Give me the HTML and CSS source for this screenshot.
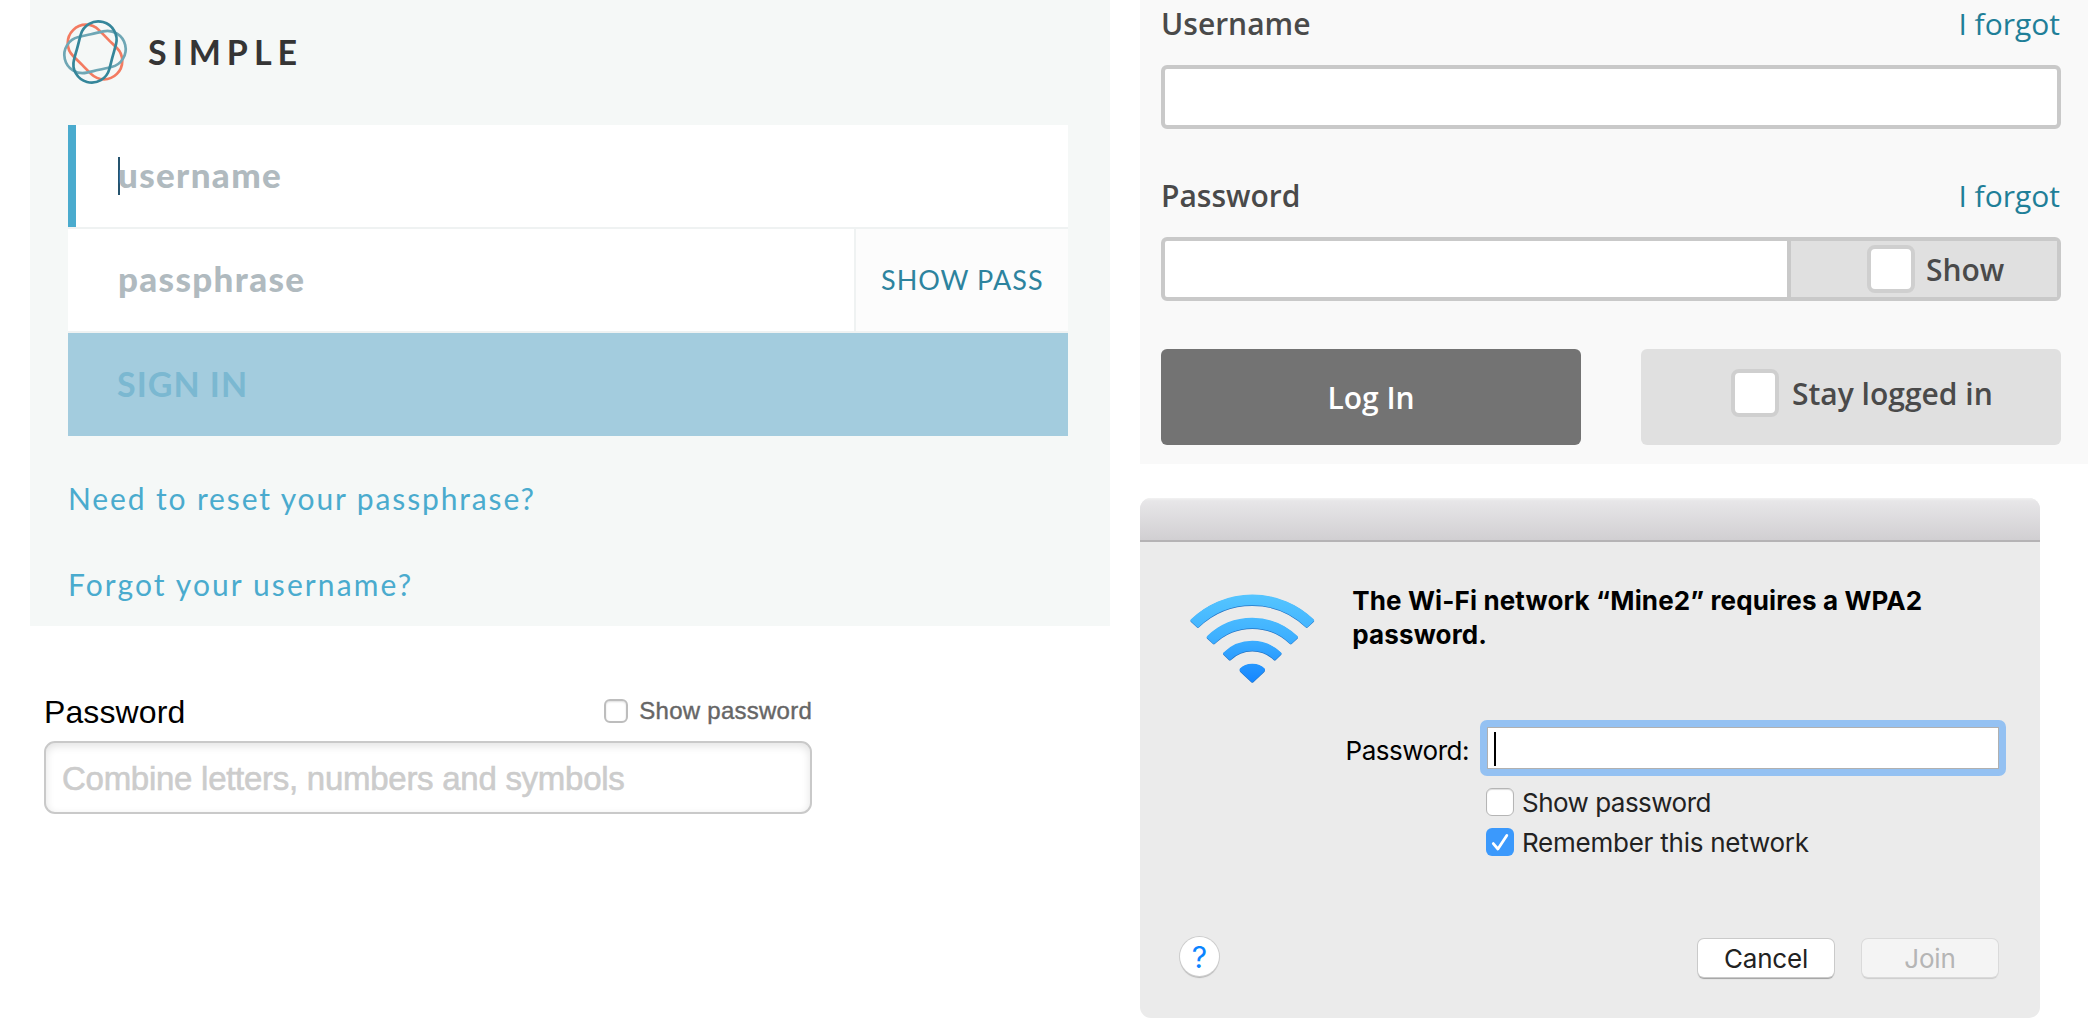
FILE: index.html
```html
<!DOCTYPE html>
<html lang="en">
<head>
<meta charset="utf-8">
<title>Password forms</title>
<link rel="stylesheet" href="styles.css">
</head>
<body>
<main class="page">
  <div class="column-left">
    <section class="simple">
      <header class="brand">
        <svg class="brand-mark" viewBox="-34 -34 68 68" fill="none" stroke-width="2.7">
          <defs>
            <path id="loop" d="M-18.3-12.7A18.3 18.3 0 0 1 18.3-12.7C18.3-7 18.2-5 18.2 0C18.2 5 18.3 7 18.3 12.7A18.3 18.3 0 0 1-18.3 12.7C-18.3 7-18.2 5-18.2 0C-18.2-5-18.3-7-18.3-12.7Z"/>
          </defs>
          <use href="#loop" stroke="#f37b61" transform="rotate(-45)"/>
          <use href="#loop" stroke="#6fa7b5" transform="rotate(77)"/>
          <use href="#loop" stroke="#35869a" transform="rotate(15)"/>
        </svg>
        <span class="brand-name">SIMPLE</span>
      </header>
      <div class="simple-form">
        <div class="simple-row focused"><span class="caret"></span><span class="simple-hint">username</span></div>
        <div class="simple-row"><span class="simple-hint">passphrase</span><span class="show-pass">SHOW PASS</span></div>
        <div class="sign-in">SIGN IN</div>
      </div>
      <nav class="simple-links">
        <a>Need to reset your passphrase?</a>
        <a class="forgot-username">Forgot your username?</a>
      </nav>
    </section>

    <section class="combine">
      <div class="combine-head">
        <span class="combine-label">Password</span>
        <span class="combine-toggle"><i class="combine-box"></i>Show password</span>
      </div>
      <div class="combine-input">Combine letters, numbers and symbols</div>
    </section>
  </div>

  <div class="column-right">
    <section class="login">
      <div class="login-head"><span>Username</span><a>I forgot</a></div>
      <div class="login-field"></div>
      <div class="login-head second"><span>Password</span><a>I forgot</a></div>
      <div class="login-field">
        <div class="login-entry"></div>
        <div class="login-show"><i class="login-box"></i><span class="box-label">Show</span></div>
      </div>
      <div class="login-actions">
        <div class="login-button">Log In</div>
        <div class="login-stay"><i class="login-box"></i><span class="box-label">Stay logged in</span></div>
      </div>
    </section>

    <section class="dialog">
      <div class="dialog-bar"></div>
      <div class="dialog-intro">
        <svg class="wifi" viewBox="180 160 376 274">
          <defs>
            <linearGradient id="sky" gradientUnits="userSpaceOnUse" x1="0" y1="165" x2="0" y2="425">
              <stop offset="0" stop-color="#55c5ff"/>
              <stop offset=".5" stop-color="#3eb0ff"/>
              <stop offset="1" stop-color="#1687ff"/>
            </linearGradient>
            <g id="waves" stroke-width="8" stroke-linejoin="round">
              <path d="M185.6 242.3A261 261 0 0 1 548.4 242.3L530.3 259.5A235 235 0 0 0 203.7 259.5Z"/>
              <path d="M234.3 292.7A191 191 0 0 1 499.7 292.7L482.4 309A166 166 0 0 0 251.6 309Z"/>
              <path d="M283.5 341.6A121 121 0 0 1 450.5 341.6L434.4 357.3A97 97 0 0 0 299.6 357.3Z"/>
              <path d="M333 390Q345 376.5 367 376.5T401 390Q401 392 399 394L367 424L335 394Q333 392 333 390Z"/>
            </g>
          </defs>
          <use href="#waves" y="1.5" fill="#2273c4" stroke="#2273c4"/>
          <use href="#waves" y="-.5" fill="url(#sky)" stroke="url(#sky)"/>
        </svg>
        <p class="dialog-title">The Wi-Fi network “Mine2” requires a WPA2 password.</p>
      </div>
      <div class="dialog-password">
        <span class="dialog-label">Password:</span>
        <div class="dialog-field"><span class="dialog-caret"></span></div>
      </div>
      <div class="dialog-checks">
        <div class="dialog-check"><i class="dialog-box"></i><span class="check-label tight">Show password</span></div>
        <div class="dialog-check">
          <i class="dialog-box checked"><svg viewBox="0 0 28 28" fill="none" stroke="#fff" stroke-width="2.8" stroke-linecap="round" stroke-linejoin="round"><path d="M7.3 15.6L11.9 21L20.8 7.4"/></svg></i>
          <span class="check-label">Remember this network</span>
        </div>
      </div>
      <footer class="dialog-footer">
        <span class="help">?</span>
        <span class="dialog-button">Cancel</span>
        <span class="dialog-button disabled">Join</span>
      </footer>
    </section>
  </div>
</main>
</body>
</html>
```
FILE: styles.css
```css
* { box-sizing: border-box; }

body { margin: 0; background: #fff; }

.page {
  display: grid;
  grid-template-columns: 1140px 948px;
  height: 1018px;
  overflow: hidden;
  white-space: nowrap;
}

/* Simple sign-in card */
.simple {
  width: 1080px;
  height: 626px;
  margin-left: 30px;
  padding-left: 38px;
  background: #f5f8f7;
  font-family: Lato, sans-serif;
}
.brand {
  display: flex;
  align-items: center;
  gap: 19px;
  height: 125px;
  margin-left: -7px;
  padding-bottom: 22px;
}
.brand-mark { width: 68px; height: 68px; }
.brand-name {
  color: #353535;
  font-size: 34px;
  font-weight: 700;
  letter-spacing: 6px;
}
.simple-form { width: 1000px; }
.simple-row {
  display: flex;
  align-items: center;
  height: 104px;
  padding-left: 50px;
  border-bottom: 2px solid #eff2f2;
  background: #fff;
}
.focused { box-shadow: inset 8px 0 #4aabce; }
.caret { width: 2px; height: 38px; margin-right: -2px; background: #25536e; }
.simple-hint {
  padding-bottom: 5px;
  color: #b0babf;
  font-size: 35px;
  font-weight: 900;
  letter-spacing: 1.35px;
}
.show-pass {
  width: 214px;
  margin-left: auto;
  padding-left: 25px;
  border-left: 2px solid #eff2f2;
  background: #fcfcfc;
  color: #2d839e;
  font-size: 27px;
  line-height: 102px;
  letter-spacing: 1px;
}
.sign-in {
  height: 103px;
  padding-left: 49px;
  background: #a3ccde;
  color: #7bb8d1;
  font-size: 34px;
  font-weight: 700;
  line-height: 101px;
  letter-spacing: 1px;
}
.simple-links {
  display: grid;
  gap: 50px;
  padding-top: 44px;
  color: #4aabce;
  font-size: 30px;
  line-height: 36px;
  letter-spacing: 1.87px;
}
.forgot-username { letter-spacing: 2.1px; }

/* Password field with placeholder advice */
.combine {
  width: 768px;
  margin: 66px 0 0 44px;
  font-family: "Liberation Sans", sans-serif;
}
.combine-head {
  display: flex;
  justify-content: space-between;
  height: 49px;
  line-height: 40px;
}
.combine-label { font-size: 32px; color: #000; letter-spacing: .1px; }
.combine-toggle {
  display: flex;
  align-items: center;
  gap: 11px;
  height: 38px;
  color: #666;
  font-size: 24px;
  letter-spacing: .25px;
  -webkit-text-stroke: .4px #666;
}
.combine-box {
  width: 24px;
  height: 24px;
  border: 2px solid #bdbdbd;
  border-radius: 6px;
  box-shadow: inset 0 1px 2px #ddd;
}
.combine-input {
  height: 73px;
  padding-left: 16px;
  border: 2px solid #c9c9c9;
  border-radius: 11px;
  box-shadow: inset 0 3px 8px #e2e2e2;
  color: #ccc;
  font-size: 33px;
  line-height: 71px;
  letter-spacing: -.27px;
  -webkit-text-stroke: .6px #ccc;
}

/* Login card */
.login {
  height: 464px;
  padding: 4px 27px 0 21px;
  background: #f9f9f9;
  color: #4a4a4a;
  font: 600 30px/40px "Open Sans", sans-serif;
}
.login-head { display: flex; justify-content: space-between; height: 61px; }
.login-head.second { margin-top: 47px; }
.login-head a { padding-right: 1px; color: #1f7f98; font-weight: 400; }
.login-field {
  display: flex;
  height: 64px;
  border: 4px solid #c9c9c9;
  border-radius: 6px;
  background: #fff;
}
.login-entry { flex: 1; border-right: 4px solid #c9c9c9; }
.login-show {
  display: flex;
  align-items: center;
  gap: 11px;
  width: 266px;
  padding-left: 76px;
  background: #e0e0e0;
}
.login-box {
  width: 48px;
  height: 48px;
  border: 4px solid #cfcfcf;
  border-radius: 8px;
  background: #fff;
}
.box-label { padding-top: 2px; }
.login-actions {
  display: grid;
  grid-template: 96px / 420px 420px;
  justify-content: space-between;
  margin-top: 48px;
}
.login-button {
  border-radius: 6px;
  background: #737373;
  color: #fff;
  line-height: 98px;
  text-align: center;
}
.login-stay {
  display: flex;
  align-items: center;
  gap: 13px;
  padding: 0 0 8px 90px;
  border-radius: 6px;
  background: #e0e0e0;
}
.login-stay .box-label { padding-top: 1px; }

/* Wi-Fi dialog */
.dialog {
  width: 900px;
  height: 520px;
  margin-top: 34px;
  overflow: hidden;
  border-radius: 11px;
  background: #ebebeb;
  color: #222;
  font: 400 26px/34px Inter, sans-serif;
}
.dialog-bar {
  height: 44px;
  border-bottom: 2px solid #b5b3b5;
  background: linear-gradient(#f2f2f2, #e7e6e8 3px, #d1cfd2);
}
.dialog-intro { display: flex; height: 178px; padding-left: 50px; }
.wifi { width: 125.3px; height: 91.3px; margin-top: 51.3px; }
.dialog-title {
  width: 590px;
  margin: 42px 0 0 37px;
  color: #000;
  font-weight: 700;
  letter-spacing: .13px;
  white-space: normal;
}
.dialog-password { display: flex; }
.dialog-label {
  width: 340px;
  padding: 14px 11px 0 0;
  color: #000;
  letter-spacing: -.48px;
  text-align: right;
}
.dialog-field {
  width: 526px;
  height: 56px;
  padding: 5px 6px;
  border: 7px solid #94c1f2;
  border-radius: 7px;
  background: #fff;
  box-shadow: inset 0 0 0 1px #b0b0b0;
}
.dialog-caret { display: block; width: 2px; height: 34px; margin-left: 1px; background: #000; }
.dialog-checks { display: grid; gap: 12px; padding: 12px 0 0 346px; }
.dialog-check {
  display: flex;
  align-items: center;
  gap: 8px;
  height: 28px;
}
.check-label { padding-top: 2px; letter-spacing: -.24px; }
.check-label.tight { letter-spacing: -.52px; }
.dialog-box {
  width: 28px;
  height: 28px;
  border: 1px solid #b5b5b5;
  border-radius: 6px;
  background: #fff;
  box-shadow: inset 0 1px 1px #ddd;
}
.dialog-box.checked { border: 0; background: #3b99fc; box-shadow: none; }
.dialog-box svg { display: block; }
.dialog-footer {
  display: flex;
  align-items: flex-start;
  gap: 27px;
  padding: 81px 42px 0 39px;
}
.help {
  width: 39px;
  height: 39px;
  margin: 0 auto 0 1px;
  border-radius: 50%;
  background: #fff;
  box-shadow: 0 0 0 1px #cdcdcd, 0 2px 1px #b5b5b5;
  color: #0a84ff;
  font-size: 30px;
  line-height: 40px;
  text-align: center;
}
.dialog-button {
  width: 136px;
  height: 38px;
  margin: 2px 0 0 1px;
  border-radius: 6px;
  background: #fff;
  box-shadow: 0 0 0 1px #cacaca, 0 1.5px 1px #a0a0a0;
  line-height: 39px;
  letter-spacing: -.2px;
  text-align: center;
}
.dialog-button.disabled {
  background: #f4f4f4;
  box-shadow: 0 0 0 1px #dadada, 0 1.5px 1px #ccc;
  color: #b5b5b5;
}
```
